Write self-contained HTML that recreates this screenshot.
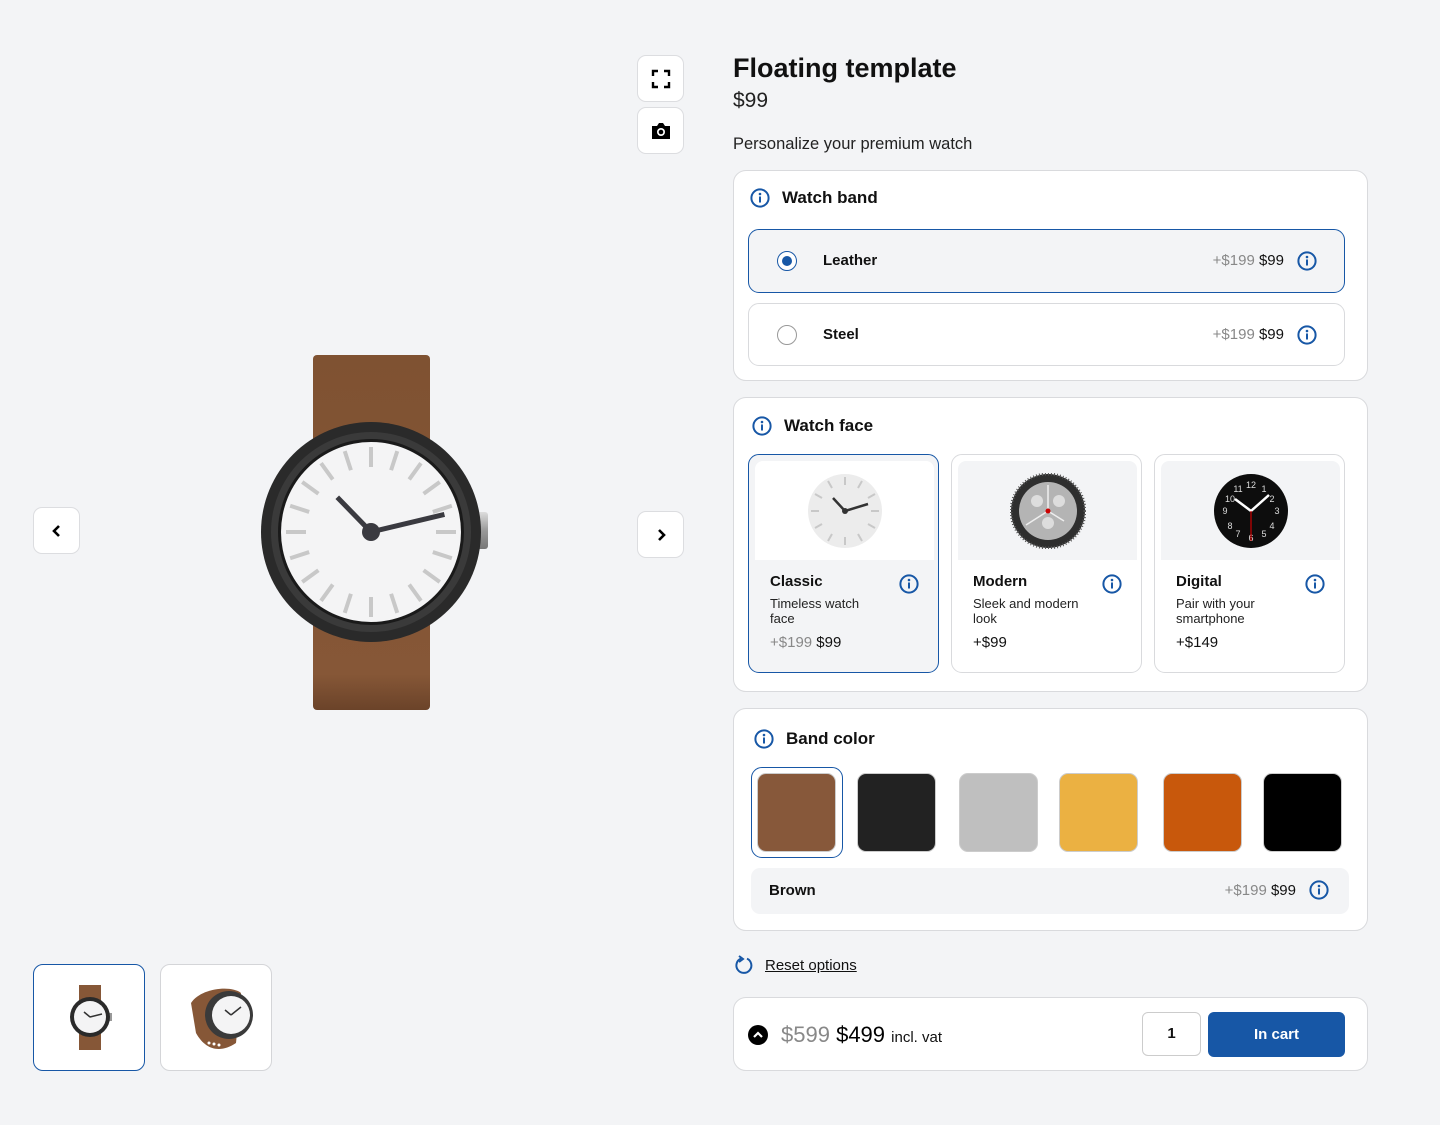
<!DOCTYPE html>
<html><head><meta charset="utf-8"><style>
*{box-sizing:border-box;margin:0;padding:0}
body{width:1440px;height:1125px;background:#f3f4f6;font-family:"Liberation Sans",sans-serif;color:#111;position:relative;overflow:hidden}
.a{position:absolute}
.btn{position:absolute;width:47px;height:47px;background:#fff;border:1px solid #dcdde0;border-radius:9px;display:flex;align-items:center;justify-content:center}
.card{position:absolute;left:733px;width:635px;background:#fff;border:1px solid #d9dadd;border-radius:13px}
.hd{position:absolute;font-size:17px;font-weight:bold;display:flex;align-items:center;gap:12px}
.opt{position:absolute;left:14px;width:597px;height:64px;border:1px solid #d9dadd;border-radius:11px;background:#fff}
.opt.sel{border-color:#1757a6;background:#f3f4f6}
.radio{position:absolute;left:28px;top:21px;width:20px;height:20px;border-radius:50%;border:1.5px solid #999;background:#fff}
.sel .radio{border-color:#1757a6}
.sel .radio:after{content:"";position:absolute;left:3.5px;top:3.5px;width:10px;height:10px;border-radius:50%;background:#1757a6}
.on{position:absolute;left:74px;top:22px;font-weight:bold;font-size:15px}
.pr{position:absolute;right:60px;top:22px;font-size:15px}
.old{color:#888}
.oi{position:absolute;right:27px;top:21px}
.tile{position:absolute;top:56px;width:191px;height:219px;border:1px solid #d9dadd;border-radius:11px;background:#fff}
.tile.sel{border-color:#1757a6;background:#f3f4f6}
.timg{position:absolute;left:6px;top:6px;width:179px;height:99px;background:#f3f4f6;border-radius:8px 8px 0 0;display:flex;align-items:center;justify-content:center}
.tile.sel .timg{background:#fff}
.tt{position:absolute;left:21px;top:118px;font-weight:bold;font-size:15px}
.td{position:absolute;left:21px;top:141px;font-size:13px;line-height:15px;color:#222;width:110px}
.tp{position:absolute;left:21px;top:179px;font-size:15px}
.ti{position:absolute;right:19px;top:119px}
.sw{position:absolute;top:64px;width:79px;height:79px;border-radius:9px;border:1px solid #ccc}
</style></head><body>
<svg width="0" height="0" style="position:absolute"><defs>
<symbol id="inf" viewBox="0 0 20 20"><circle cx="10" cy="10" r="8.6" fill="none" stroke="#1757a6" stroke-width="2"/><circle cx="10" cy="6" r="1.3" fill="#1757a6"/><rect x="9" y="8.3" width="2" height="6.5" rx="1" fill="#1757a6"/></symbol>
</defs></svg>

<div class="btn" style="left:33px;top:507px"><svg width="14" height="14" viewBox="0 0 14 14"><path d="M9 2L4 7l5 5" fill="none" stroke="#000" stroke-width="2.6"/></svg></div>
<div class="btn" style="left:637px;top:511px"><svg width="14" height="14" viewBox="0 0 14 14"><path d="M5 2l5 5-5 5" fill="none" stroke="#000" stroke-width="2.6"/></svg></div>
<div class="btn" style="left:637px;top:55px"><svg width="20" height="20" viewBox="0 0 20 20" fill="none" stroke="#000" stroke-width="2.4"><path d="M2 7V2h5M13 2h5v5M18 13v5h-5M7 18H2v-5"/></svg></div>
<div class="btn" style="left:637px;top:107px"><svg width="22" height="20" viewBox="0 0 22 20"><path d="M2 5h5l2-3h4l2 3h5v13H2z" fill="#000"/><circle cx="11" cy="11" r="4" fill="#fff"/><circle cx="11" cy="11" r="2.3" fill="#000"/></svg></div>

<svg class="a" style="left:250px;top:340px" width="250" height="380" viewBox="250 340 250 380">
<defs><linearGradient id="bd" x1="0" y1="0" x2="0" y2="1"><stop offset="0" stop-color="#7f5232"/><stop offset=".9" stop-color="#865737"/><stop offset="1" stop-color="#6b4329"/></linearGradient>
<linearGradient id="cr" x1="0" y1="0" x2="0" y2="1"><stop offset="0" stop-color="#ddd"/><stop offset=".5" stop-color="#999"/><stop offset="1" stop-color="#777"/></linearGradient></defs>
<rect x="313" y="355" width="117" height="355" rx="4" fill="url(#bd)"/>
<rect x="476" y="512" width="12" height="37" rx="3" fill="url(#cr)"/>
<circle cx="371" cy="532" r="110" fill="#2a2a2a"/>
<circle cx="371" cy="532" r="100" fill="#3a3a3a"/>
<circle cx="371" cy="532" r="93" fill="#1a1a1a"/>
<circle cx="371" cy="532" r="90" fill="#f4f4f5"/>
<g stroke="#c8c8c8" stroke-width="4">
<line x1="371" y1="447" x2="371" y2="467"/>
<g transform="rotate(18 371 532)"><line x1="371" y1="447" x2="371" y2="467"/></g>
<g transform="rotate(36 371 532)"><line x1="371" y1="447" x2="371" y2="467"/></g>
<g transform="rotate(54 371 532)"><line x1="371" y1="447" x2="371" y2="467"/></g>
<g transform="rotate(72 371 532)"><line x1="371" y1="447" x2="371" y2="467"/></g>
<g transform="rotate(90 371 532)"><line x1="371" y1="447" x2="371" y2="467"/></g>
<g transform="rotate(108 371 532)"><line x1="371" y1="447" x2="371" y2="467"/></g>
<g transform="rotate(126 371 532)"><line x1="371" y1="447" x2="371" y2="467"/></g>
<g transform="rotate(144 371 532)"><line x1="371" y1="447" x2="371" y2="467"/></g>
<g transform="rotate(162 371 532)"><line x1="371" y1="447" x2="371" y2="467"/></g>
<g transform="rotate(180 371 532)"><line x1="371" y1="447" x2="371" y2="467"/></g>
<g transform="rotate(198 371 532)"><line x1="371" y1="447" x2="371" y2="467"/></g>
<g transform="rotate(216 371 532)"><line x1="371" y1="447" x2="371" y2="467"/></g>
<g transform="rotate(234 371 532)"><line x1="371" y1="447" x2="371" y2="467"/></g>
<g transform="rotate(252 371 532)"><line x1="371" y1="447" x2="371" y2="467"/></g>
<g transform="rotate(270 371 532)"><line x1="371" y1="447" x2="371" y2="467"/></g>
<g transform="rotate(288 371 532)"><line x1="371" y1="447" x2="371" y2="467"/></g>
<g transform="rotate(306 371 532)"><line x1="371" y1="447" x2="371" y2="467"/></g>
<g transform="rotate(324 371 532)"><line x1="371" y1="447" x2="371" y2="467"/></g>
<g transform="rotate(342 371 532)"><line x1="371" y1="447" x2="371" y2="467"/></g>
</g>
<g stroke="#3a3a40" stroke-width="5" stroke-linecap="square"><line x1="371" y1="532" x2="339" y2="499"/><line x1="371" y1="532" x2="442" y2="515"/></g>
<circle cx="371" cy="532" r="9" fill="#3a3a40"/>
</svg>

<div class="a" style="left:33px;top:964px;width:112px;height:107px;background:#fff;border:1.5px solid #1757a6;border-radius:10px">
<svg width="112" height="107" viewBox="0 0 112 107"><rect x="45" y="20" width="22" height="65" fill="#865737"/><rect x="75" y="48" width="3" height="8" fill="#999"/><circle cx="56" cy="52" r="20" fill="#2a2a2a"/><circle cx="56" cy="52" r="16" fill="#f4f4f5"/><path d="M56 52l-6-5M56 52l12-3" stroke="#333" stroke-width="1.5"/></svg></div>
<div class="a" style="left:160px;top:964px;width:112px;height:107px;background:#fff;border:1px solid #d4d5d8;border-radius:10px">
<svg width="112" height="107" viewBox="0 0 112 107"><path d="M30 38c10-15 40-18 50-10l-5 50c-15 10-30 8-40-10z" fill="#865737"/><circle cx="68" cy="50" r="24" fill="#3a3a3a"/><circle cx="70" cy="50" r="19" fill="#f4f4f5"/><path d="M70 50l-6-5M70 50l10-8" stroke="#333" stroke-width="1.5"/><circle cx="48" cy="78" r="1.5" fill="#fff"/><circle cx="53" cy="79" r="1.5" fill="#fff"/><circle cx="58" cy="80" r="1.5" fill="#fff"/></svg></div>

<div class="a" style="left:733px;top:53px;font-size:27px;font-weight:bold">Floating template</div>
<div class="a" style="left:733px;top:89px;font-size:21px;color:#222">$99</div>
<div class="a" style="left:733px;top:135px;font-size:16.5px;color:#222">Personalize your premium watch</div>

<div class="card" style="top:170px;height:211px">
<div class="hd" style="left:16px;top:17px"><svg width="20" height="20"><use href="#inf"/></svg>Watch band</div>
<div class="opt sel" style="top:58px"><div class="radio"></div><div class="on">Leather</div><div class="pr"><span class="old">+$199</span> $99</div><svg class="oi" width="20" height="20"><use href="#inf"/></svg></div>
<div class="opt" style="top:132px;height:63px"><div class="radio"></div><div class="on">Steel</div><div class="pr"><span class="old">+$199</span> $99</div><svg class="oi" width="20" height="20"><use href="#inf"/></svg></div>
</div>

<div class="card" style="top:397px;height:295px">
<div class="hd" style="left:18px;top:18px"><svg width="20" height="20"><use href="#inf"/></svg>Watch face</div>
<div class="tile sel" style="left:14px"><div class="timg"><svg width="76" height="76" viewBox="0 0 76 76"><circle cx="38" cy="38" r="37" fill="#ececec"/><g stroke="#c8c8c8" stroke-width="2"><line x1="38" y1="4" x2="38" y2="12"/><line x1="38" y1="64" x2="38" y2="72"/><line x1="4" y1="38" x2="12" y2="38"/><line x1="64" y1="38" x2="72" y2="38"/><line x1="21" y1="8" x2="25" y2="15"/><line x1="55" y1="8" x2="51" y2="15"/><line x1="8" y1="21" x2="15" y2="25"/><line x1="68" y1="21" x2="61" y2="25"/><line x1="8" y1="55" x2="15" y2="51"/><line x1="68" y1="55" x2="61" y2="51"/><line x1="21" y1="68" x2="25" y2="61"/><line x1="55" y1="68" x2="51" y2="61"/></g><path d="M38 38l-12-13M38 38l23-7" stroke="#333" stroke-width="2.5"/><circle cx="38" cy="38" r="3" fill="#333"/></svg></div><div class="tt">Classic</div><div class="td">Timeless watch face</div><div class="tp"><span class="old">+$199</span> $99</div><svg class="ti" width="20" height="20"><use href="#inf"/></svg></div>
<div class="tile" style="left:217px"><div class="timg"><svg width="76" height="76" viewBox="0 0 76 76"><circle cx="38" cy="38" r="37" fill="#2e2e2e"/><circle cx="38" cy="38" r="37" fill="none" stroke="#555" stroke-width="3" stroke-dasharray="1 2"/><circle cx="38" cy="38" r="29" fill="#b4b4b4"/><circle cx="27" cy="28" r="6" fill="#ddd"/><circle cx="49" cy="28" r="6" fill="#ddd"/><circle cx="38" cy="50" r="6" fill="#ddd"/><path d="M38 38V12M38 38l-22 14M38 38l16 10" stroke="#eee" stroke-width="1.5"/><circle cx="38" cy="38" r="2.5" fill="#c00"/></svg></div><div class="tt">Modern</div><div class="td">Sleek and modern look</div><div class="tp">+$99</div><svg class="ti" width="20" height="20"><use href="#inf"/></svg></div>
<div class="tile" style="left:420px"><div class="timg"><svg width="76" height="76" viewBox="0 0 76 76" font-family="Liberation Sans" font-size="9" fill="#ddd" text-anchor="middle"><circle cx="38" cy="38" r="37" fill="#0d0d0d"/><text x="38" y="15">12</text><text x="64" y="41">3</text><text x="38" y="68">6</text><text x="12" y="41">9</text><text x="25" y="19">11</text><text x="51" y="19">1</text><text x="17" y="29">10</text><text x="59" y="29">2</text><text x="17" y="56">8</text><text x="59" y="56">4</text><text x="25" y="64">7</text><text x="51" y="64">5</text><path d="M38 38L22 26M38 38l18-16" stroke="#fff" stroke-width="2.5"/><path d="M38 38v30" stroke="#c00" stroke-width="1.2"/></svg></div><div class="tt">Digital</div><div class="td">Pair with your smartphone</div><div class="tp">+$149</div><svg class="ti" width="20" height="20"><use href="#inf"/></svg></div>
</div>

<div class="card" style="top:708px;height:223px">
<div class="hd" style="left:20px;top:20px"><svg width="20" height="20"><use href="#inf"/></svg>Band color</div>
<div class="a" style="left:17px;top:58px;width:92px;height:91px;border:1.5px solid #1757a6;border-radius:11px"></div>
<div class="sw" style="left:23px;background:#87583a"></div>
<div class="sw" style="left:123px;background:#222"></div>
<div class="sw" style="left:225px;background:#bfbfbf"></div>
<div class="sw" style="left:325px;background:#ebb142"></div>
<div class="sw" style="left:429px;background:#c8580c"></div>
<div class="sw" style="left:529px;background:#000"></div>
<div class="a" style="left:17px;top:159px;width:598px;height:46px;background:#f3f4f6;border-radius:9px">
<div class="a" style="left:18px;top:14px;font-size:15px;font-weight:bold">Brown</div>
<div class="a" style="right:53px;top:14px;font-size:15px"><span class="old">+$199</span> $99</div>
<svg class="a" style="right:20px;top:12px" width="20" height="20"><use href="#inf"/></svg></div>
</div>

<svg class="a" style="left:734px;top:955px" width="20" height="20" viewBox="0 0 20 20"><path d="M7 3.5A7.5 7.5 0 1 0 13 3.6" fill="none" stroke="#1757a6" stroke-width="2"/><path d="M5 1l4 3-4 3" fill="none" stroke="#1757a6" stroke-width="2"/></svg>
<div class="a" style="left:765px;top:957px;font-size:15px;text-decoration:underline;color:#111">Reset options</div>

<div class="card" style="top:997px;height:74px">
<div class="a" style="left:14px;top:27px;width:20px;height:20px;border-radius:50%;background:#000"><svg width="20" height="20" viewBox="0 0 20 20"><path d="M6 12l4-4 4 4" fill="none" stroke="#fff" stroke-width="2.2"/></svg></div>
<div class="a" style="left:47px;top:24px;font-size:22px;white-space:nowrap"><span style="color:#888">$599</span> <span style="color:#000">$499</span> <span style="font-size:15px">incl. vat</span></div>
<div class="a" style="left:408px;top:14px;width:59px;height:44px;border:1px solid #ccc;border-radius:6px;text-align:center;line-height:42px;font-weight:bold;font-size:15px">1</div>
<div class="a" style="left:474px;top:14px;width:137px;height:45px;background:#1757a6;border-radius:6px;color:#fff;text-align:center;line-height:45px;font-weight:bold;font-size:15px">In cart</div>
</div>
</body></html>
